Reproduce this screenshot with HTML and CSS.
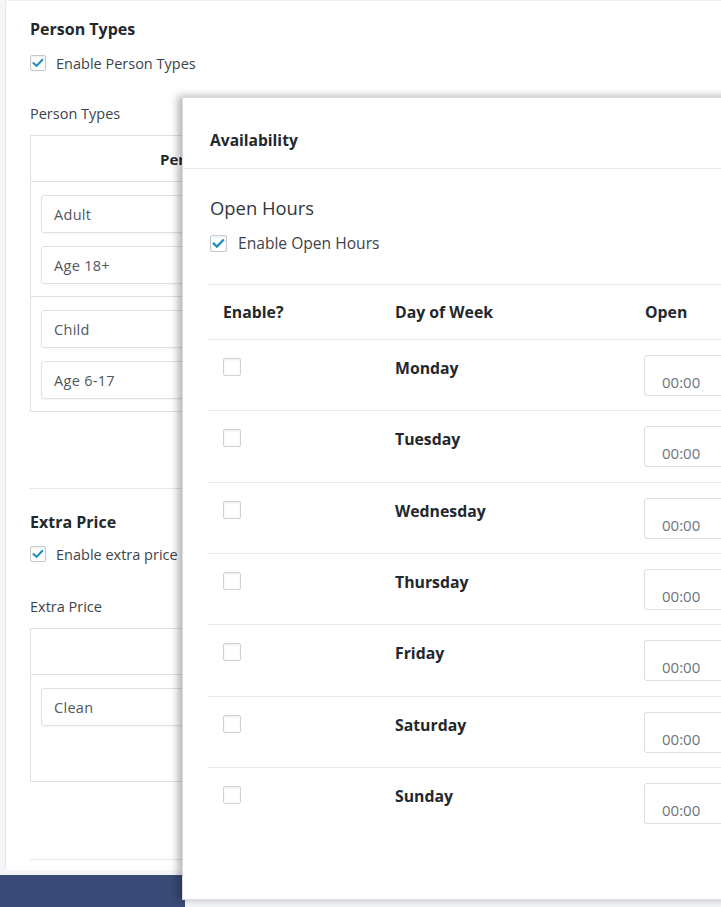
FILE: index.html
```html
<!DOCTYPE html>
<html lang="en">
<head>
<meta charset="utf-8">
<title>Availability</title>
<link rel="stylesheet" href="styles.css">
</head>
<body>
<div class="page">
  <div class="main">
    <section class="sec">
      <h2 class="sec-title">Person Types</h2>
      <label class="check"><span class="cb on"><svg viewBox="0 0 16 16" width="14" height="14"><path d="M3 8.2 L6.3 11.3 L12.8 4.6" fill="none" stroke="#1e8cbe" stroke-width="2.4" stroke-linecap="square"/></svg></span>Enable Person Types</label>
      <div class="field-label">Person Types</div>
      <div class="repeater">
        <div class="rep-head"><span class="rep-head-text">Person Type</span></div>
        <div class="rep-group">
          <div class="inp">Adult</div>
          <div class="inp">Age 18+</div>
        </div>
        <div class="rep-group">
          <div class="inp">Child</div>
          <div class="inp">Age 6-17</div>
        </div>
      </div>
    </section>
    <div class="rule rule-1"></div>
    <section class="sec sec-extra">
      <h2 class="sec-title">Extra Price</h2>
      <label class="check check-extra"><span class="cb on"><svg viewBox="0 0 16 16" width="14" height="14"><path d="M3 8.2 L6.3 11.3 L12.8 4.6" fill="none" stroke="#1e8cbe" stroke-width="2.4" stroke-linecap="square"/></svg></span>Enable extra price</label>
      <div class="field-label field-label-extra">Extra Price</div>
      <div class="repeater">
        <div class="rep-head"></div>
        <div class="rep-group rep-group-extra">
          <div class="inp">Clean</div>
        </div>
      </div>
    </section>
    <div class="rule rule-2"></div>
  </div>
  <div class="footer-bar"></div>

  <div class="modal">
    <div class="modal-head">Availability</div>
    <div class="modal-body">
      <h3 class="oh-title">Open Hours</h3>
      <label class="check check-oh"><span class="cb on mid"><svg viewBox="0 0 16 16" width="15" height="15"><path d="M3 8.2 L6.3 11.3 L12.8 4.6" fill="none" stroke="#1e8cbe" stroke-width="2.4" stroke-linecap="square"/></svg></span>Enable Open Hours</label>
      <div class="hours">
        <div class="hrow hhead">
          <div>Enable?</div>
          <div>Day of Week</div>
          <div>Open</div>
        </div>
        <div class="hrow"><div><span class="cb big"></span></div><div class="day">Monday</div><div><div class="time">00:00</div></div></div>
        <div class="hrow"><div><span class="cb big"></span></div><div class="day">Tuesday</div><div><div class="time">00:00</div></div></div>
        <div class="hrow"><div><span class="cb big"></span></div><div class="day">Wednesday</div><div><div class="time">00:00</div></div></div>
        <div class="hrow"><div><span class="cb big"></span></div><div class="day">Thursday</div><div><div class="time">00:00</div></div></div>
        <div class="hrow"><div><span class="cb big"></span></div><div class="day">Friday</div><div><div class="time">00:00</div></div></div>
        <div class="hrow"><div><span class="cb big"></span></div><div class="day">Saturday</div><div><div class="time">00:00</div></div></div>
        <div class="hrow last"><div><span class="cb big"></span></div><div class="day">Sunday</div><div><div class="time">00:00</div></div></div>
      </div>
    </div>
  </div>
</div>
</body>
</html>
```

FILE: styles.css
```css
* { box-sizing: border-box; }
html, body {
  margin: 0;
  padding: 0;
  width: 721px;
  height: 907px;
  overflow: hidden;
  background: #ffffff;
  font-family: "Open Sans", "Noto Sans", sans-serif;
  color: #23282d;
}
.page {
  position: relative;
  width: 721px;
  height: 907px;
  background: #f3f5f8;
}
.main {
  margin-left: 5px;
  width: 716px;
  height: 870px;
  background: #ffffff;
  border-left: 1px solid #e3e7ee;
  border-top: 1px solid #f6eeee;
  padding: 18px 0 0 24px;
}
.sec-title {
  margin: 0;
  font-size: 16px;
  line-height: 20px;
  font-weight: 700;
  color: #23282d;
}
.check {
  display: flex;
  align-items: center;
  gap: 10px;
  height: 20px;
  margin-top: 14px;
  font-size: 14.5px;
  color: #3c434a;
}
.cb {
  flex: none;
  display: inline-flex;
  align-items: center;
  justify-content: center;
  width: 16px;
  height: 16px;
  border: 1px solid #c3c8ce;
  border-radius: 2px;
  background: #ffffff;
  box-shadow: inset 0 1px 2px rgba(0,0,0,0.08);
}
.cb.mid {
  width: 17px;
  height: 17px;
}
.cb.big {
  width: 18px;
  height: 18px;
  border-color: #cfd2d6;
}
.field-label {
  margin-top: 31px;
  font-size: 14.5px;
  line-height: 20px;
  color: #3c434a;
}
.repeater {
  margin-top: 11px;
  width: 680px;
  border: 1px solid #dde2e9;
}
.rep-head {
  height: 46px;
  border-bottom: 1px solid #dde2e9;
  padding-left: 129px;
  display: flex;
  align-items: center;
}
.rep-head-text {
  font-size: 15px;
  font-weight: 700;
  color: #23282d;
}
.rep-group {
  padding: 13px 10px 12px 10px;
  display: flex;
  flex-direction: column;
  gap: 13px;
  border-bottom: 1px solid #dde2e9;
}
.rep-group:last-child { border-bottom: 0; }
.rep-group-extra { padding-bottom: 55px; }
.inp {
  height: 38px;
  border: 1px solid #dde2e9;
  border-radius: 3px;
  padding-left: 12px;
  display: flex;
  align-items: center;
  font-size: 14.5px;
  letter-spacing: 0.3px;
  color: #50575e;
  box-shadow: 0 1px 2px rgba(0,0,0,0.04);
}
.rule {
  height: 1px;
  width: 680px;
  background: #e4e7ec;
}
.rule-1 { margin-top: 76px; }
.sec-extra { margin-top: 23px; }
.check-extra { margin-top: 12px; }
.field-label-extra { margin-top: 33px; }
.rule-2 { margin-top: 77px; }
.footer-bar {
  position: absolute;
  left: 0;
  top: 875px;
  width: 185px;
  height: 32px;
  background: #394a76;
}

/* modal */
.modal {
  position: absolute;
  left: 182px;
  top: 97px;
  width: 580px;
  height: 803px;
  background: #ffffff;
  border: 1px solid #d9dce1;
  box-shadow: -4px -1px 8px rgba(0,0,0,0.3);
}
.modal-head {
  height: 71px;
  padding: 32px 0 0 27px;
  border-bottom: 1px solid #e6e8ec;
  font-size: 15.6px;
  line-height: 20px;
  font-weight: 700;
  color: #23282d;
}
.modal-body {
  padding: 27px 0 0 27px;
}
.oh-title {
  margin: 0;
  font-size: 18.4px;
  line-height: 24px;
  font-weight: 400;
  color: #32373c;
}
.check-oh {
  margin-top: 13px;
  gap: 11px;
  font-size: 15.6px;
}
.hours {
  margin-top: 31px;
  margin-left: -2px;
  border-top: 1px solid #e6e8ec;
}
.hrow {
  display: grid;
  grid-template-columns: 172px 250px 1fr;
  padding-left: 15px;
  height: 71.35px;
  border-bottom: 1px solid #e6e8ec;
  font-size: 15.8px;
}
.hrow.last { border-bottom: 0; }
.hhead {
  height: 55px;
  align-items: center;
  font-weight: 700;
  color: #23282d;
}
.hrow .cb.big { margin-top: 18px; }
.day {
  padding-top: 17px;
  line-height: 22px;
  font-weight: 700;
  color: #23282d;
}
.time {
  margin-top: 15px;
  margin-left: -1px;
  width: 120px;
  height: 41px;
  border: 1px solid #dcdfe3;
  border-radius: 3px;
  padding: 13px 0 0 17px;
  line-height: 26px;
  font-size: 15px;
  color: #6b7580;
}
```
